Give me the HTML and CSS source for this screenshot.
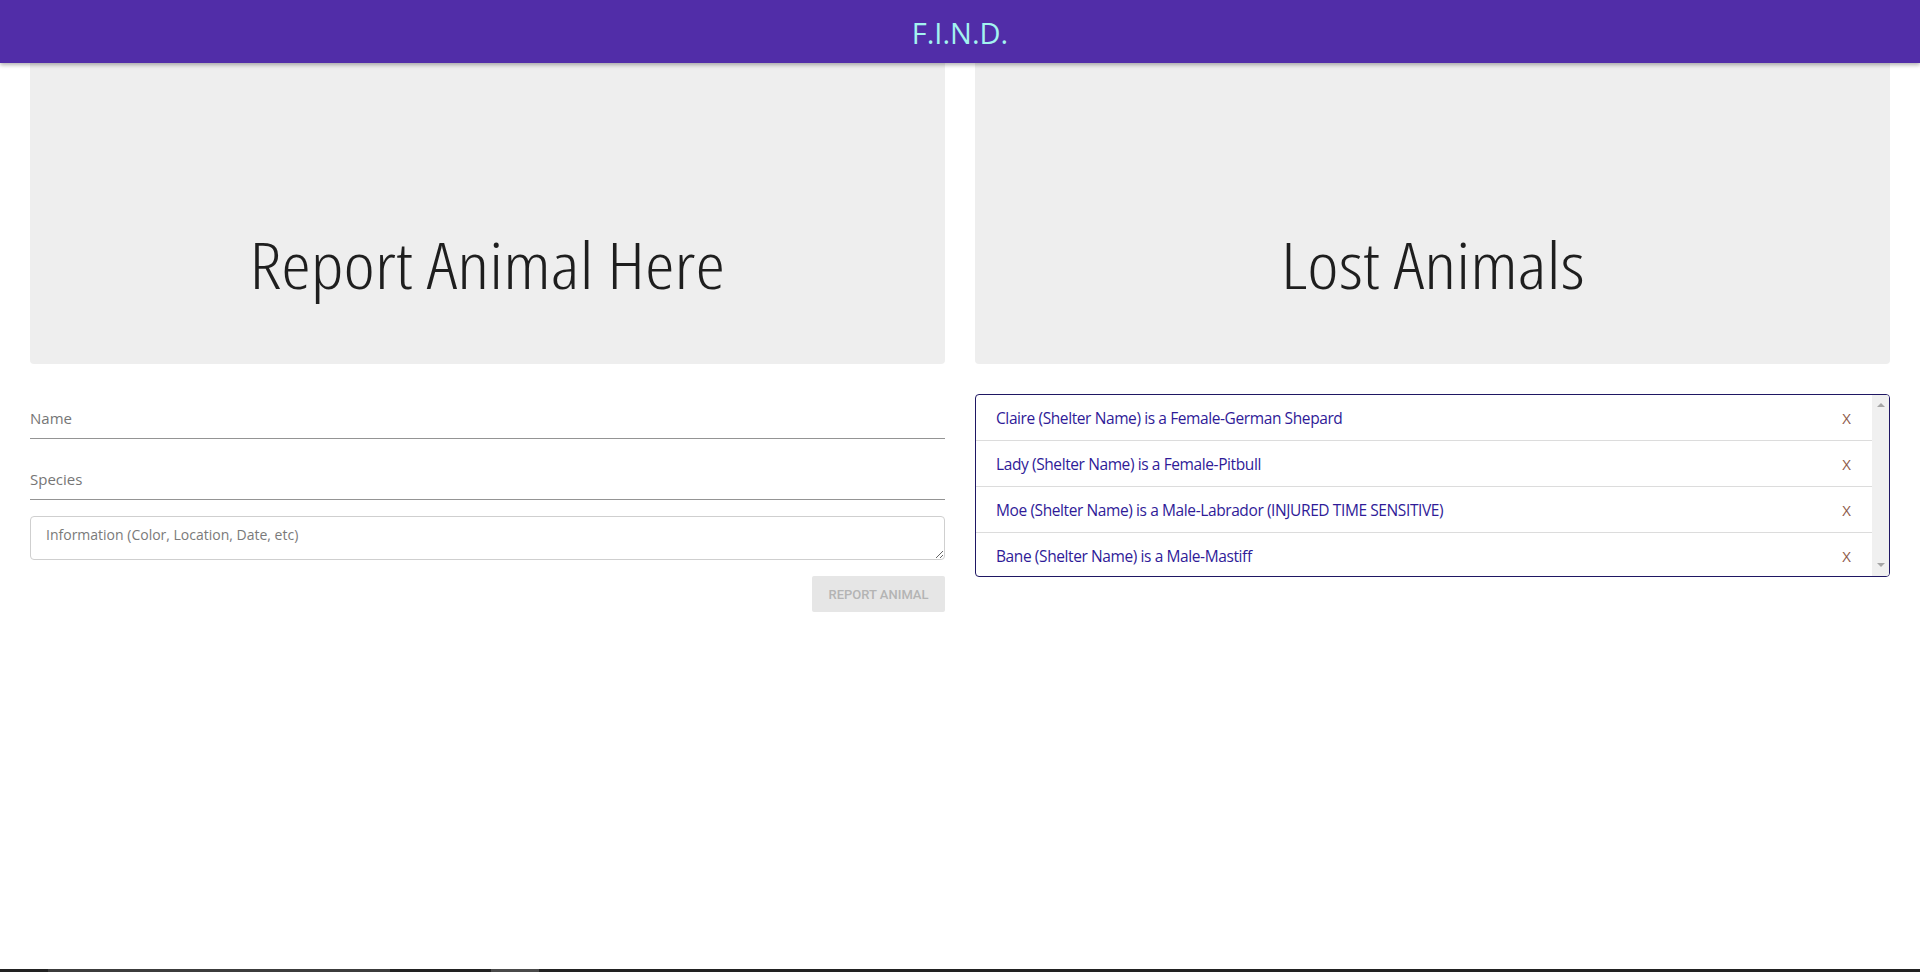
FILE: index.html
```html
<!DOCTYPE html>
<html lang="en">
<head>
<meta charset="utf-8">
<title>F.I.N.D.</title>
<link rel="stylesheet" href="styles.css">
</head>
<body>
<header class="appbar">
  <div class="brand">F.I.N.D.</div>
</header>
<main class="page">
  <section class="column">
    <div class="jumbo"><h1 class="jumbo-title">Report Animal Here</h1></div>
    <form class="report-form">
      <input class="field" type="text" placeholder="Name">
      <input class="field" type="text" placeholder="Species">
      <textarea class="info" placeholder="Information (Color, Location, Date, etc)"></textarea>
      <div class="actions"><button class="btn" type="button" disabled>Report Animal</button></div>
    </form>
  </section>
  <section class="column">
    <div class="jumbo"><h1 class="jumbo-title">Lost Animals</h1></div>
    <div class="animal-panel">
      <ul class="animal-list">
        <li class="animal"><span class="animal-text">Claire (Shelter Name) is a Female-German Shepard</span><span class="remove">X</span></li>
        <li class="animal"><span class="animal-text">Lady (Shelter Name) is a Female-Pitbull</span><span class="remove">X</span></li>
        <li class="animal"><span class="animal-text">Moe (Shelter Name) is a Male-Labrador (INJURED TIME SENSITIVE)</span><span class="remove">X</span></li>
        <li class="animal"><span class="animal-text">Bane (Shelter Name) is a Male-Mastiff</span><span class="remove">X</span></li>
      </ul>
      <div class="scrollbar" aria-hidden="true">
        <span class="arrow arrow-up"></span>
        <span class="arrow arrow-down"></span>
      </div>
    </div>
  </section>
</main>
<div class="window-strip"><span class="seg1"></span><span class="seg2"></span></div>
</body>
</html>
```
FILE: styles.css
```css
* { box-sizing: border-box; }
html, body { margin: 0; padding: 0; background: #fff; }
body { font-family: "Open Sans", "Noto Sans", sans-serif; color: #212121; }

.appbar {
  height: 63px;
  background: #512da8;
  display: flex;
  align-items: center;
  justify-content: center;
  box-shadow: 0 2px 4px rgba(0,0,0,0.3);
  position: relative;
  z-index: 2;
}
.brand {
  color: #a3f3f0;
  font-size: 29px;
  line-height: 1;
  padding-top: 2px;
}

.page {
  display: grid;
  grid-template-columns: 1fr 1fr;
  column-gap: 30px;
  padding: 0 30px;
}
.column { display: flex; flex-direction: column; min-width: 0; }

.jumbo {
  height: 301px;
  background: #eeeeee;
  border-radius: 0 0 4px 4px;
  display: flex;
  align-items: flex-end;
  justify-content: center;
  padding-bottom: 61px;
}
.jumbo-title {
  margin: 0;
  font-family: "Open Sans", sans-serif;
  font-weight: 350;
  font-stretch: 75%;
  font-size: 64px;
  line-height: 77px;
  color: #1e1e1e;
  white-space: nowrap;
  transform: scaleX(1.17);
}

.report-form { display: flex; flex-direction: column; margin-top: 30px; }
.field {
  height: 45px;
  border: none;
  border-bottom: 1px solid #949494;
  padding: 12px 0 8px;
  font-family: "Open Sans", sans-serif;
  font-size: 15px;
  line-height: 24px;
  color: #212121;
  background: transparent;
  outline: none;
  margin-bottom: 16px;
}
.field::placeholder { color: #767676; }
.info {
  height: 44px;
  border: 1px solid #cfcfcf;
  border-radius: 4px;
  padding: 7px 15px;
  font-family: "Open Sans", sans-serif;
  font-size: 14px;
  line-height: 22px;
  resize: vertical;
  outline: none;
  margin: 0 0 16px;
}
.info::placeholder { color: #7a7a7a; }
.actions { display: flex; justify-content: flex-end; }
.btn {
  width: 133px;
  height: 36px;
  border: none;
  border-radius: 2px;
  background: #e6e6e6;
  color: #b4b4b4;
  font-family: "Roboto", sans-serif;
  font-weight: 500;
  font-size: 13px;
  text-transform: uppercase;
  padding: 0;
}

.animal-panel {
  margin-top: 30px;
  height: 183px;
  border: 1px solid #1f1763;
  border-radius: 4px;
  display: flex;
  overflow: hidden;
}
.animal-list {
  list-style: none;
  margin: 0;
  padding: 0;
  flex: 1;
  min-width: 0;
  overflow: hidden;
}
.animal {
  height: 46px;
  border-bottom: 1px solid #dcdcdc;
  display: flex;
  align-items: center;
  justify-content: space-between;
  padding: 0 21px 0 20px;
  font-size: 15.5px;
  letter-spacing: -0.4px;
  color: #2f1b98;
}
.remove { color: #8d5a4a; font-size: 15px; letter-spacing: 0; }

.scrollbar {
  width: 17px;
  flex: none;
  background: #f0f0f0;
  display: flex;
  flex-direction: column;
  justify-content: space-between;
  align-items: center;
  padding: 8px 0 9px;
}
.arrow { width: 0; height: 0; border-left: 4px solid transparent; border-right: 4px solid transparent; }
.arrow-up { border-bottom: 4px solid #a6a6a6; }
.arrow-down { border-top: 4px solid #a6a6a6; }

.window-strip {
  position: fixed;
  left: 0; right: 0; bottom: 0;
  height: 3px;
  background: #222;
}
.window-strip .seg1 { position: absolute; left: 48px; width: 342px; top: 0; bottom: 0; background: #3c3c3c; }
.window-strip .seg2 { position: absolute; left: 491px; width: 48px; top: 0; bottom: 0; background: #4a4a4a; }
```
